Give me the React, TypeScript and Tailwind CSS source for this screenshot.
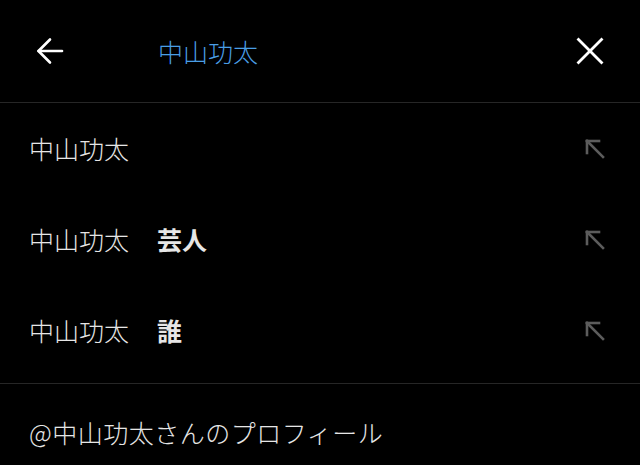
import React from 'react';

const FONT = '"Noto Sans CJK JP", "Noto Sans", sans-serif';

const suggestions: { base: string; extra?: string }[] = [
  { base: '中山功太' },
  { base: '中山功太', extra: '芸人' },
  { base: '中山功太', extra: '誰' },
];

const FillArrow: React.FC = () => (
  <svg width="22" height="22" viewBox="0 0 22 22" fill="none" stroke="#5c5c5c" strokeWidth="2.6" strokeLinecap="square">
    <path d="M3 3 L19 19" />
    <path d="M3 3 H15" />
    <path d="M3 3 V15" />
  </svg>
);

const App: React.FC = () => {
  return (
    <div className="w-[640px] h-[465px] bg-black overflow-hidden" style={{ fontFamily: FONT }}>
      {/* search header */}
      <header className="h-[103px] flex items-center border-b border-[#262626]">
        <button className="w-[100px] h-full flex items-center pl-[36px] pb-px">
          <svg width="28" height="28" viewBox="0 0 28 28" fill="none" stroke="#ffffff" strokeWidth="2.6" strokeLinecap="round" strokeLinejoin="round">
            <path d="M26 14 H2.5" />
            <path d="M14 2.5 L2.5 14 L14 25.5" />
          </svg>
        </button>
        <div className="flex-1 pl-[58px] text-[25px] leading-none text-[#4a9ee6] font-light">中山功太</div>
        <button className="w-[100px] h-full flex items-center justify-end pr-[36px]">
          <svg width="28" height="28" viewBox="0 0 28 28" fill="none" stroke="#ffffff" strokeWidth="2.8" strokeLinecap="square">
            <path d="M2.5 2.5 L25.5 25.5" />
            <path d="M25.5 2.5 L2.5 25.5" />
          </svg>
        </button>
      </header>

      {/* suggestions */}
      <ul className="pb-[7px] border-b border-[#262626]">
        {suggestions.map((s, i) => (
          <li key={i} className="h-[91px] flex items-center justify-between pl-[29px] pr-[34px]">
            <span className="text-[25px] leading-none text-[#e6e6e6] font-light">
              {s.base}
              {s.extra && <span className="ml-[28px] font-bold text-[#e6e6e6]">{s.extra}</span>}
            </span>
            <FillArrow />
          </li>
        ))}
      </ul>

      <div className="h-[96px] flex items-center pl-[29px]">
        <span className="text-[25px] leading-none text-[#e6e6e6] font-light tracking-[0.5px]">@中山功太さんのプロフィール</span>
      </div>
    </div>
  );
};

export default App;
